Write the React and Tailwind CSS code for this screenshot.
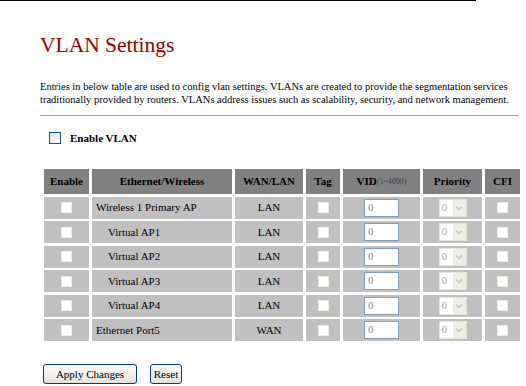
const rows = [
  { name: "Wireless 1 Primary AP", indent: false, type: "LAN" },
  { name: "Virtual AP1", indent: true, type: "LAN" },
  { name: "Virtual AP2", indent: true, type: "LAN" },
  { name: "Virtual AP3", indent: true, type: "LAN" },
  { name: "Virtual AP4", indent: true, type: "LAN" },
  { name: "Ethernet Port5", indent: false, type: "WAN" },
];

function GrayBox() {
  return <div className="w-[11px] h-[11px] bg-white border border-[#ecebe4]"></div>;
}

function VidInput() {
  return (
    <div className="w-[35px] h-[18px] bg-white border border-[#7f9db9] text-[11px] leading-[12px] text-[#8a8a8a] pl-[3px] pt-[1px]">
      0
    </div>
  );
}

function PrioritySelect() {
  return (
    <div className="w-[28px] h-[18px] flex border border-[#e6e4d6] bg-[#f4f3ee]">
      <div className="w-[13px] bg-white text-[11px] leading-[12px] text-[#a8a8a8] pl-[2px] pt-[1px]">0</div>
      <div className="flex-1 flex items-center justify-center bg-[#eeede6]">
        <svg width="8" height="6" viewBox="0 0 8 6">
          <path d="M1 1.5 L4 4.5 L7 1.5" fill="none" stroke="#c4c4c4" strokeWidth="1.6" />
        </svg>
      </div>
    </div>
  );
}

export default function App() {
  return (
    <div className="w-[526px] h-[386px] bg-white font-['Liberation_Serif',serif] text-black overflow-hidden">
      <div className="w-[476px] h-px bg-black"></div>

      <div className="pl-[40px]">
        {/* 제목 */}
        <h1 className="mt-[31px] text-[21.5px] leading-[26px] text-[#990000]">VLAN Settings</h1>

        <p className="mt-[22px] w-[480px] text-[10.5px] leading-[13px]">
          Entries in below table are used to config vlan settings. VLANs are created to provide the segmentation services
          traditionally provided by routers. VLANs address issues such as scalability, security, and network management.
        </p>

        <div className="mt-[9px] w-[478px] h-px bg-[#a0a09a]"></div>

        <div className="mt-[16px] flex items-center h-[12px]">
          <div className="ml-[9px] w-[12px] h-[12px] border border-[#1c5180] bg-gradient-to-br from-[#dcdcd7] to-white"></div>
          <span className="ml-[9px] text-[11px] font-bold">Enable VLAN</span>
        </div>
      </div>

      {/* VLAN 테이블 */}
      <div className="ml-[44px] mt-[25px] grid grid-cols-[45px_140px_68px_34px_77px_59px_35px] gap-x-[3px] gap-y-[2.5px] text-[11px]">
        <div className="h-[25px] bg-[#808080] flex items-center justify-center font-bold">Enable</div>
        <div className="h-[25px] bg-[#808080] flex items-center justify-center font-bold">Ethernet/Wireless</div>
        <div className="h-[25px] bg-[#808080] flex items-center justify-center font-bold">WAN/LAN</div>
        <div className="h-[25px] bg-[#808080] flex items-center justify-center font-bold">Tag</div>
        <div className="h-[25px] bg-[#808080] flex items-center justify-center">
          <span className="font-bold">VID</span>
          <span className="text-[8px] text-[#2c3e5a]">(1~4090)</span>
        </div>
        <div className="h-[25px] bg-[#808080] flex items-center justify-center font-bold">Priority</div>
        <div className="h-[25px] bg-[#808080] flex items-center justify-center font-bold">CFI</div>

        {rows.map((row) => (
          <div key={row.name} className="contents">
            <div className="h-[22px] bg-[#c0c0c0] flex items-center justify-center"><GrayBox /></div>
            <div className={"h-[22px] bg-[#c0c0c0] flex items-center " + (row.indent ? "pl-[16px]" : "pl-[4px]")}>{row.name}</div>
            <div className="h-[22px] bg-[#c0c0c0] flex items-center justify-center">{row.type}</div>
            <div className="h-[22px] bg-[#c0c0c0] flex items-center justify-center"><GrayBox /></div>
            <div className="h-[22px] bg-[#c0c0c0] flex items-center justify-center"><VidInput /></div>
            <div className="h-[22px] bg-[#c0c0c0] flex items-center justify-center"><PrioritySelect /></div>
            <div className="h-[22px] bg-[#c0c0c0] flex items-center justify-center"><GrayBox /></div>
          </div>
        ))}
      </div>

      <div className="ml-[43px] mt-[23px] flex gap-[13px]">
        <button className="w-[94px] h-[20px] rounded-[3px] border border-[#003c74] bg-gradient-to-b from-white to-[#e3e2da] text-[11px] leading-[18px]">Apply Changes</button>
        <button className="w-[32px] h-[20px] rounded-[3px] border border-[#003c74] bg-gradient-to-b from-white to-[#e3e2da] text-[11px] leading-[18px]">Reset</button>
      </div>
    </div>
  );
}
